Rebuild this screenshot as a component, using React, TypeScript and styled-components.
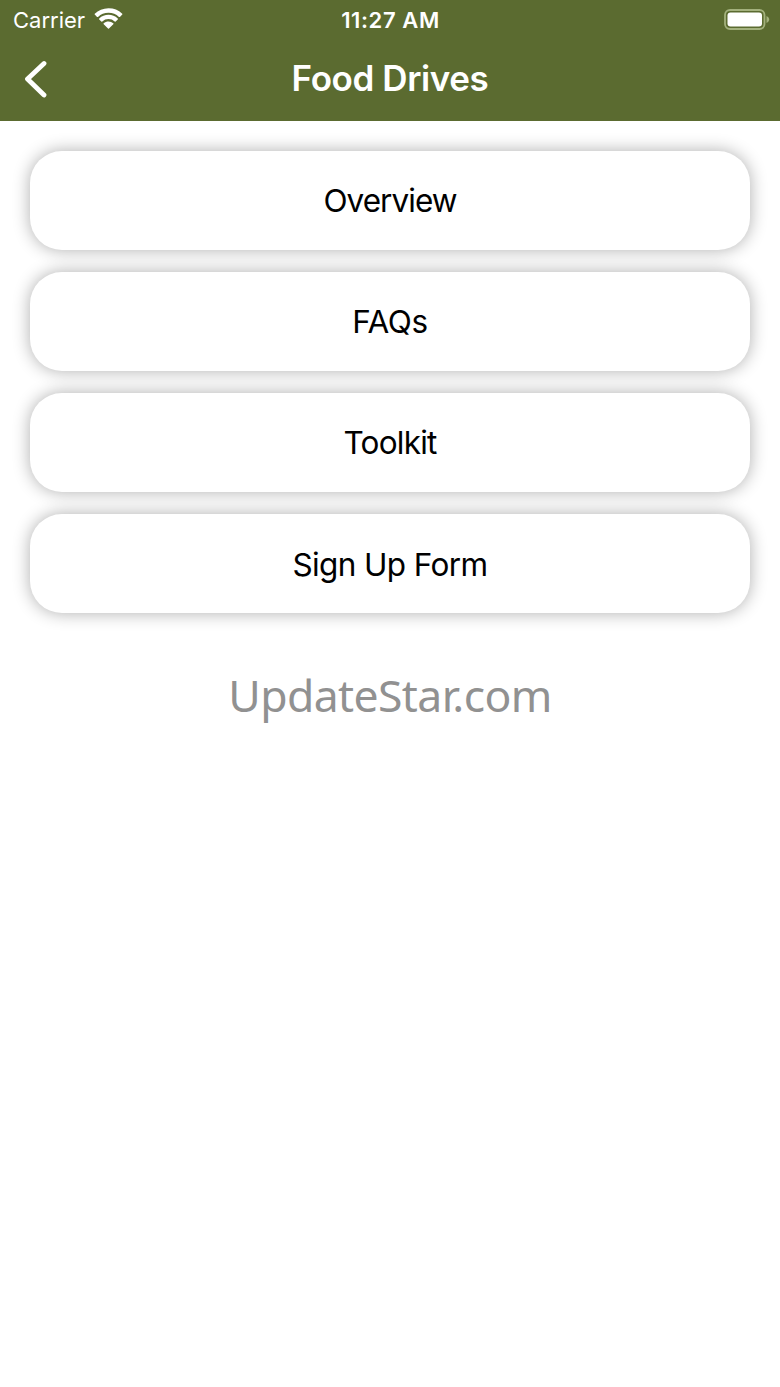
import { FC } from 'react';
import styled, { createGlobalStyle } from 'styled-components';

const GlobalStyle = createGlobalStyle`
  body {
    margin: 0;
    background: #fff;
    font-family: Inter, 'Liberation Sans', sans-serif;
  }
`;
const Screen = styled.div`
  min-height: 1387px;
  background: #fff;
`;
const Header = styled.header`
  height: 121px;
  color: #fff;
  background: #5b6b30;
`;
const StatusBar = styled.div`
  display: grid;
  grid-template-columns: 1fr auto 1fr;
  align-items: center;
  height: 39px;
  padding: 0 10px 0 13px;
`;
const Carrier = styled.div`
  display: flex;
  align-items: center;
  gap: 9px;
  font-size: 22px;
`;
const WifiIcon = styled.svg`
  margin-bottom: 2px;
`;
const Time = styled.span`
  margin-right: 2px;
  font-size: 22px;
  font-weight: 600;
  letter-spacing: 0.6px;
`;
const Battery = styled.svg`
  justify-self: end;
`;
const NavBar = styled.div`
  display: grid;
  grid-template-columns: 60px 1fr 60px;
  align-items: center;
  height: 80px;
`;
const BackButton = styled.button`
  display: flex;
  padding: 0 0 0 23px;
  border: 0;
  background: none;
  color: inherit;
`;
const Title = styled.h1`
  margin: 0 0 2px;
  text-align: center;
  font-size: 35px;
  font-weight: 600;
  letter-spacing: -0.4px;
`;
const Menu = styled.nav`
  display: flex;
  flex-direction: column;
  gap: 22.5px;
  padding: 30px 30px 0;
`;
const MenuButton = styled.button<{ $spacing: number }>`
  height: 98.6px;
  padding: 1px 0 0;
  border: 0;
  border-radius: 32px;
  background: #fff;
  box-shadow: 0 0 17px rgba(0, 0, 0, 0.32);
  color: #000;
  font-family: inherit;
  font-size: 31.5px;
  letter-spacing: ${({ $spacing }) => $spacing}px;
`;
const Watermark = styled.div`
  margin-top: 50.5px;
  text-align: center;
  font-family: 'Noto Sans', 'Open Sans', sans-serif;
  font-size: 44.5px;
  letter-spacing: -0.6px;
  line-height: 64px;
  color: #919191;
`;

const items = [
  { label: 'Overview', spacing: -0.95 },
  { label: 'FAQs', spacing: -0.4 },
  { label: 'Toolkit', spacing: -0.75 },
  { label: 'Sign Up Form', spacing: -0.6 },
];

const App: FC = () => {
  return (
    <Screen>
      <GlobalStyle />
      <Header>
        <StatusBar>
          <Carrier>
            Carrier
            <WifiIcon width="29" height="21" viewBox="0 0 30 22" fill="currentColor">
              <path d="M15 .2C9.4.2 4.3 2.4.6 5.900a.7.7 0 0 0 0 1L3 9.300a.7.7 0 0 0 1 0A15.900 15.900 0 0 1 26 9.300a.7.7 0 0 0 1 0l2.400-2.400a.7.7 0 0 0 0-1A20.900 20.900 0 0 0 15 .2z" />
              <path d="M15 7.2c-3.7 0-7.1 1.4-9.7 3.8a.7.7 0 0 0 0 1L7.5 14.200a.7.7 0 0 0 1 0 9.400 9.400 0 0 1 13 0 .7.7 0 0 0 1 0l2.200-2.200a.7.7 0 0 0 0-1A14.2 14.2 0 0 0 15 7.2z" />
              <path d="M15 14.2c-1.9 0-3.6.7-5 1.8a.7.7 0 0 0 0 1.1l4.5 4.3a.7.7 0 0 0 1 0l4.5-4.3a.7.7 0 0 0 0-1.1 7.7 7.7 0 0 0-5-1.8z" />
            </WifiIcon>
          </Carrier>
          <Time>11:27 AM</Time>
          <Battery width="46" height="21" viewBox="0 0 46 21">
            <rect x="1" y="1" width="39.5" height="19" rx="5" fill="none" stroke="#a3b17d" strokeWidth="1.8" />
            <rect x="3.5" y="3.5" width="34.5" height="14" rx="3" fill="#fff" />
            <path d="M42.5 7v7c1.8-.8 2.7-2 2.7-3.5S44.3 7.8 42.5 7z" fill="#a3b17d" />
          </Battery>
        </StatusBar>
        <NavBar>
          <BackButton aria-label="Back">
            <svg width="25" height="38" viewBox="0 0 25 38" fill="none" stroke="currentColor" strokeWidth="4.8" strokeLinecap="round" strokeLinejoin="round">
              <path d="M21 3.5L4.5 19 21 35" />
            </svg>
          </BackButton>
          <Title>Food Drives</Title>
        </NavBar>
      </Header>
      <Menu>
        {items.map(({ label, spacing }) => (
          <MenuButton key={label} $spacing={spacing}>
            {label}
          </MenuButton>
        ))}
      </Menu>
      <Watermark>UpdateStar.com</Watermark>
    </Screen>
  );
};

export default App;
